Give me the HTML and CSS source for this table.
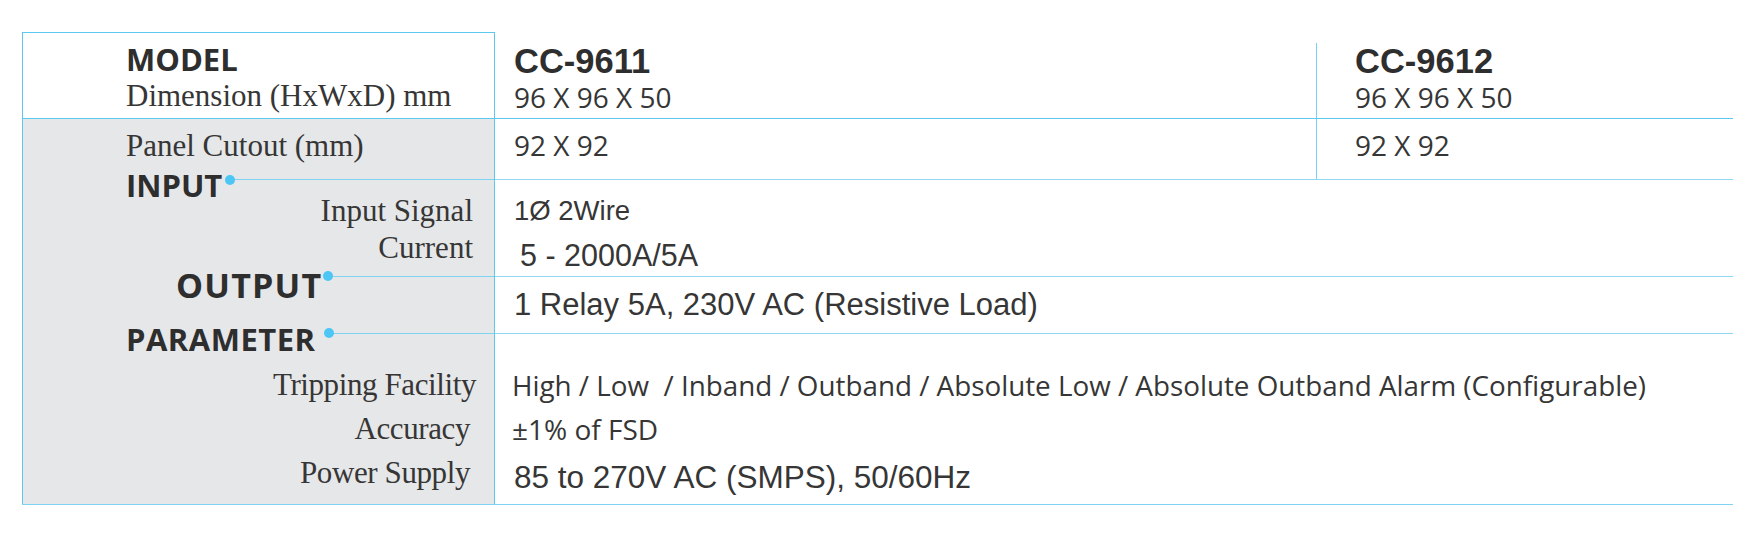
FILE: index.html
```html
<!DOCTYPE html>
<html lang="en">
<head>
<meta charset="utf-8">
<title>CC-9611 / CC-9612 Specifications</title>
<link rel="stylesheet" href="styles.css">
</head>
<body>
<div class="spec">
  <div class="lab lab-head">
    <div class="model">MODEL</div>
    <div class="lbl lbl-dim">Dimension (HxWxD) mm</div>
  </div>
  <div class="val-split">
    <div class="col col-a col-top">
      <div class="code">CC-9611</div>
      <div class="dim">96 X 96 X 50</div>
    </div>
    <div class="col col-b col-b-top">
      <div class="code">CC-9612</div>
      <div class="dim">96 X 96 X 50</div>
    </div>
  </div>

  <div class="lab lab-cut">
    <div class="lbl lbl-cut">Panel Cutout (mm)</div>
  </div>
  <div class="val-split val-cut">
    <div class="col col-a col-cut">
      <div class="dim dim-cut">92 X 92</div>
    </div>
    <div class="col col-b col-cut">
      <div class="dim dim-cut">92 X 92</div>
    </div>
  </div>

  <div class="lab">
    <div class="head head-in">
      <span class="head-text">INPUT</span><span class="dot"></span><span class="wire"></span>
    </div>
    <div class="lbl">Input Signal</div>
    <div class="lbl">Current</div>
  </div>
  <div class="val val-sec">
    <div class="v v-wire">1Ø 2Wire</div>
    <div class="v v-cur">5 - 2000A/5A</div>
  </div>

  <div class="lab">
    <div class="head head-out">
      <span class="head-text">OUTPUT</span><span class="dot"></span><span class="wire"></span>
    </div>
  </div>
  <div class="val val-sec">
    <div class="v v-relay">1 Relay 5A, 230V AC (Resistive Load)</div>
  </div>

  <div class="lab">
    <div class="head head-par">
      <span class="head-text">PARAMETER</span><span class="dot"></span><span class="wire"></span>
    </div>
    <div class="lbl lbl-44 lbl-trip">Tripping Facility</div>
    <div class="lbl lbl-44 lbl-in">Accuracy</div>
    <div class="lbl lbl-44 lbl-in">Power Supply</div>
  </div>
  <div class="val val-sec">
    <div class="m m-trip">High / Low&nbsp; / Inband / Outband / Absolute Low / Absolute Outband Alarm (Configurable)</div>
    <div class="m m-acc">±1% of FSD</div>
    <div class="v v-power">85 to 270V AC (SMPS), 50/60Hz</div>
  </div>
</div>
</body>
</html>
```
FILE: styles.css
```css
* {
  box-sizing: border-box;
  margin: 0;
  padding: 0;
}

body {
  margin: 0;
  background: #ffffff;
  color: #363636;
}

.spec {
  display: grid;
  grid-template-columns: 473px 1238px;
  grid-template-rows: 86px 61px 97px 57px 171px;
  width: 1711px;
  margin: 32px 0 0 22px;
  border-bottom: 1px solid #7fd2f2;
}

/* ---------- left label column ---------- */
.lab {
  display: flex;
  flex-direction: column;
  background: #e6e7e8;
  border-left: 1px solid #5cc8f0;
  border-right: 1px solid #5cc8f0;
  padding-left: 103px;
  padding-right: 21px;
}

.lab-head {
  background: #ffffff;
  border-top: 1px solid #5cc8f0;
  padding-top: 10px;
}

.lab-cut {
  border-top: 1px solid #5cc8f0;
  padding-top: 7px;
}

.model {
  font: 700 31px/32px "Open Sans", sans-serif;
  color: #2e2e2e;
}

.lbl {
  font: 31px/37px "Liberation Serif", serif;
  text-align: right;
  color: #363636;
}

.lbl-dim {
  text-align: left;
  line-height: 41px;
}

.lbl-cut {
  text-align: left;
  line-height: 40px;
}

.lbl-44 {
  line-height: 44px;
  letter-spacing: -0.4px;
}

.lbl-trip {
  margin-top: 14px;
  margin-right: -3px;
}

.lbl-in {
  margin-right: 3px;
}

/* section headings with connector */
.head {
  display: flex;
  align-items: flex-start;
  margin-right: -21px;
}

.head-text {
  font: 700 31px/14px "Open Sans", sans-serif;
  color: #2e2e2e;
  white-space: nowrap;
}

.dot {
  flex: none;
  width: 10px;
  height: 10px;
  border-radius: 50%;
  background: #4cc6f4;
}

.wire {
  flex: 1;
  height: 1px;
  background: #7fd2f2;
}

.head-in {
  height: 14px;
  margin-top: -1px;
}
.head-in .dot {
  margin-left: 3px;
  margin-top: -3.5px;
}
.head-in .wire {
  margin-top: 1px;
}

.head-out {
  height: 20px;
  margin-top: -1px;
  margin-left: 50px;
}
.head-out .head-text {
  font-size: 34px;
  line-height: 20px;
  letter-spacing: 1.2px;
}
.head-out .dot {
  margin-left: 1px;
  margin-top: -4px;
}
.head-out .wire {
  margin-top: 1px;
}

.head-par {
  height: 20px;
  margin-top: -4px;
}
.head-par .head-text {
  line-height: 20px;
  letter-spacing: 0.5px;
}
.head-par .dot {
  margin-left: 8px;
  margin-top: -1px;
}
.head-par .wire {
  margin-top: 4px;
}

/* ---------- right value area ---------- */
.val-split {
  display: flex;
}

.val-cut {
  border-top: 1px solid #5cc8f0;
}

.col {
  display: flex;
  flex-direction: column;
}

.col-a {
  width: 821px;
  padding-left: 19px;
}

.col-b {
  flex: 1;
  border-left: 1px solid #78d0f2;
  padding-left: 38px;
}

.col-top {
  padding-top: 11px;
}

.col-b-top {
  margin-top: 11px;
}

.col-cut {
  padding-top: 6px;
}

.code {
  font: 700 34.5px/36px "Liberation Sans", Arial, sans-serif;
  color: #2e2e2e;
}

.dim {
  font: 28px/36px "Open Sans", sans-serif;
  color: #363636;
}

.dim-cut {
  line-height: 40px;
}

.val {
  display: flex;
  flex-direction: column;
  padding-left: 19px;
}

.val-sec {
  border-top: 1px solid #8fd7f3;
}

.v {
  font-family: "Liberation Sans", Arial, sans-serif;
  color: #363636;
  white-space: nowrap;
}

.v-wire {
  font-size: 27.5px;
  line-height: 40px;
  margin-top: 11px;
}

.v-cur {
  font-size: 30.5px;
  line-height: 42px;
  margin-top: 3px;
  padding-left: 6px;
}

.v-relay {
  font-size: 31px;
  line-height: 40px;
  margin-top: 8px;
}

.v-power {
  font-size: 31.5px;
  line-height: 50px;
  margin-top: 1px;
}

.m {
  font-family: "Open Sans", sans-serif;
  color: #363636;
  white-space: nowrap;
  line-height: 44px;
  margin-left: -2px;
}

.m-trip {
  font-size: 27.8px;
  margin-top: 29px;
}

.m-acc {
  font-size: 28px;
}
```
